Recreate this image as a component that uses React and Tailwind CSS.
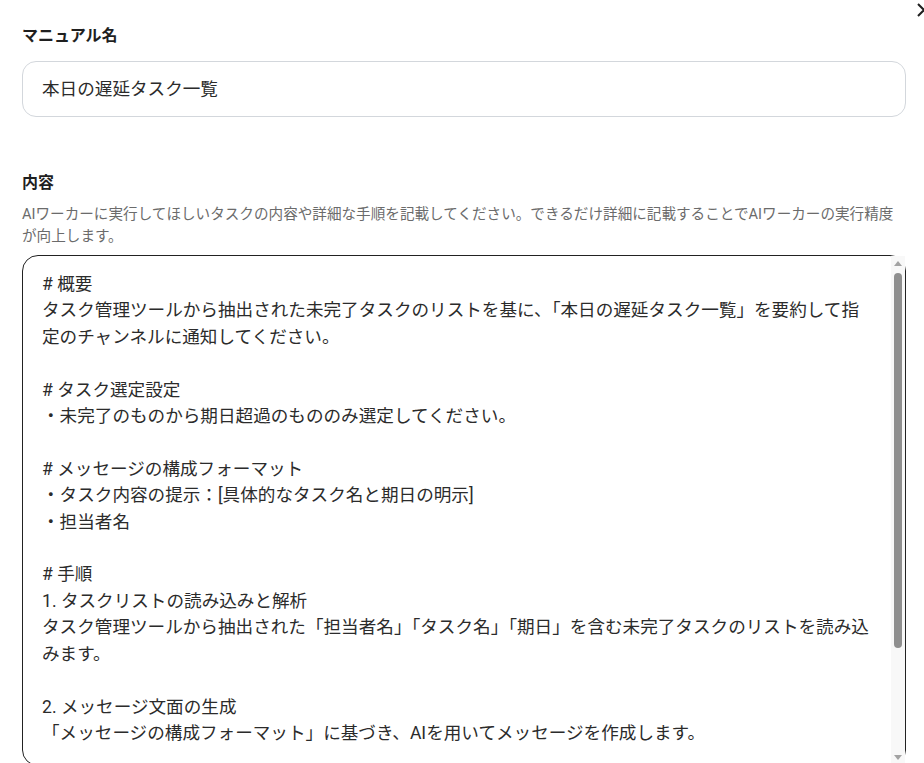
const content = `# 概要
タスク管理ツールから抽出された未完了タスクのリストを基に、「本日の遅延タスク一覧」を要約して指
定のチャンネルに通知してください。

# タスク選定設定
・未完了のものから期日超過のもののみ選定してください。

# メッセージの構成フォーマット
・タスク内容の提示：[具体的なタスク名と期日の明示]
・担当者名

# 手順
1. タスクリストの読み込みと解析
タスク管理ツールから抽出された「担当者名」「タスク名」「期日」を含む未完了タスクのリストを読み込
みます。

2. メッセージ文面の生成
「メッセージの構成フォーマット」に基づき、AIを用いてメッセージを作成します。

3. 通知の送信
作成したメッセージを指定のチャンネルに送信します。
`

function ScrollTrack() {
  return (
    <div className="pointer-events-none absolute bottom-px right-px top-px flex w-[14px] flex-col bg-[#f8f8f8]">
      <div className="flex h-[15px] items-center justify-center">
        <div className="h-0 w-0 border-x-[4px] border-b-[5px] border-x-transparent border-b-[#a3a3a3]" />
      </div>
      <div className="flex-1">
        <div className="mx-auto mt-[2px] h-[375px] w-[8px] rounded-full bg-[#8f8f8f]" />
      </div>
      <div className="flex h-[15px] items-center justify-center">
        <div className="h-0 w-0 border-x-[4px] border-t-[5px] border-x-transparent border-t-[#a3a3a3]" />
      </div>
    </div>
  )
}

export default function App() {
  return (
    <div
      className="relative h-[763px] overflow-hidden bg-white pl-[22px] pr-[18px] pt-6 text-[#1f1f1f]"
      style={{ fontFamily: 'Roboto, "Noto Sans CJK JP", sans-serif' }}
    >
      <button className="absolute left-[915px] top-[1px] text-[#1f1f1f]">
        <svg width="18" height="18" viewBox="0 0 18 18" fill="none" stroke="currentColor" strokeWidth="2">
          <path d="M3 3l12 12M15 3L3 15" />
        </svg>
      </button>

      <label className="block text-base font-bold leading-6">マニュアル名</label>
      <input
        type="text"
        defaultValue="本日の遅延タスク一覧"
        className="mt-[13px] block h-14 w-full rounded-[14px] border border-[#d3d7dc] px-[19px] pb-[3px] text-[17.6px] text-[#2b2b2b] outline-none"
      />

      <label className="mt-[54px] block text-base font-bold leading-6">内容</label>
      <p className="mt-2 text-[14.6px] leading-[22px] text-[#6b6b6b]">
        AIワーカーに実行してほしいタスクの内容や詳細な手順を記載してください。できるだけ詳細に記載することでAIワーカーの実行精度が向上します。
      </p>

      <div className="relative mt-2">
        <textarea
          defaultValue={content}
          className="block h-[511px] w-full resize-none overflow-hidden rounded-2xl border border-[#222] pb-4 pl-[19px] pr-6 pt-[15px] text-[17.6px] leading-[26.4px] text-[#2b2b2b] outline-none"
        />
        <ScrollTrack />
      </div>
    </div>
  )
}
